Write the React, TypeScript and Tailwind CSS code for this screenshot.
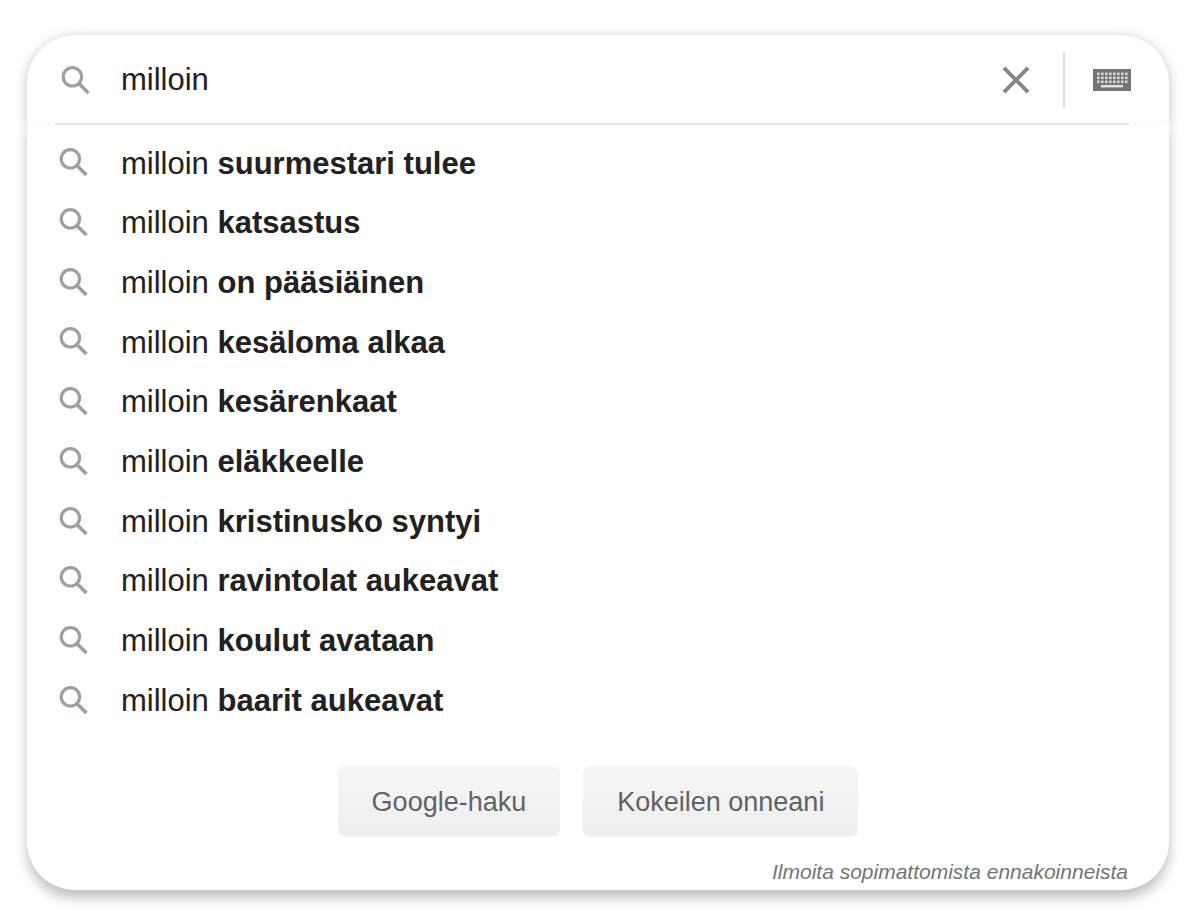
const QUERY = 'milloin';

const SUGGESTIONS = [
    'suurmestari tulee',
    'katsastus',
    'on pääsiäinen',
    'kesäloma alkaa',
    'kesärenkaat',
    'eläkkeelle',
    'kristinusko syntyi',
    'ravintolat aukeavat',
    'koulut avataan',
    'baarit aukeavat',
];

const SearchIcon = () => (
    <svg viewBox="0 0 39 39" className="size-[39px] shrink-0 fill-none stroke-[#9aa0a6]" aria-hidden="true">
        <circle cx="16.4" cy="15.8" r="9.2" strokeWidth="3.2" />
        <path d="M22.6 22.2L32.4 32" strokeWidth="3.6" />
    </svg>
);

const ClearIcon = () => (
    <svg viewBox="0 0 24 24" className="size-[46px] fill-[#80868b]" aria-hidden="true">
        <path d="M19 6.41L17.59 5 12 10.59 6.41 5 5 6.41 10.59 12 5 17.59 6.41 19 12 13.41 17.59 19 19 17.59 13.41 12z" />
    </svg>
);

const KeyboardIcon = () => (
    <svg viewBox="0 0 38 22" className="h-[22px] w-[38px]" aria-hidden="true">
        <rect width="38" height="22" fill="#757575" />
        {[3.5, 7.5, 11.5].map((y) =>
            [4, 8, 12, 16, 20, 24, 28, 32].map((x) => (
                <rect key={`${x}-${y}`} x={x} y={y} width="2.6" height="2.6" fill="#d6d6d6" />
            ))
        )}
        <rect x="8" y="16" width="22" height="2.4" fill="#e4e4e4" />
    </svg>
);

const SearchButton = ({ children }: { children: string }) => (
    <button
        type="button"
        className="h-[71px] rounded-lg bg-linear-to-b from-[#f5f5f5] to-[#efefef] px-[34px] pt-0.5 text-[27px] text-[#5f6368]"
    >
        {children}
    </button>
);

const App = () => {
    return (
        <main className="bg-white pt-[35px] pr-[31px] pb-[29px] pl-[27px] font-['Liberation_Sans',Arial,sans-serif] text-[31px] text-[#212121]">
            <form onSubmit={(e) => e.preventDefault()}>
                {/* Search field */}
                <div className="flex h-[88px] items-center rounded-t-[48px] bg-white pt-0.5 pr-[38px] pl-[29px] shadow-[0_2px_12px_rgba(32,33,36,0.28)]">
                    <SearchIcon />
                    <input
                        type="text"
                        aria-label="Haku"
                        defaultValue={QUERY}
                        className="ml-[26px] min-w-0 flex-1 bg-transparent outline-none"
                    />
                    <button type="button" aria-label="Tyhjennä">
                        <ClearIcon />
                    </button>
                    <span className="mr-7 ml-6 h-14 w-[2px] bg-[#dadce0]" />
                    <button type="button" aria-label="Näppäimistö">
                        <KeyboardIcon />
                    </button>
                </div>

                {/* Suggestions dropdown */}
                <div className="relative rounded-b-[48px] bg-white pb-1 shadow-[0_8px_12px_rgba(32,33,36,0.28)]">
                    <div className="mr-10 ml-7 h-[2px] bg-[#e4e6ea]" />
                    <ul className="mt-2 grid min-h-[597px] grid-rows-10">
                        {SUGGESTIONS.map((text) => (
                            <li key={text} className="flex items-center pl-[27px]">
                                <SearchIcon />
                                <a href="#" className="ml-7 pt-0.5 whitespace-pre">
                                    {QUERY} <b>{text}</b>
                                </a>
                            </li>
                        ))}
                    </ul>
                    <div className="mt-9 flex justify-center gap-[23px]">
                        <SearchButton>Google-haku</SearchButton>
                        <SearchButton>Kokeilen onneani</SearchButton>
                    </div>
                    <div className="mt-5 mr-[41px] text-right text-[21px] leading-[29px] text-[#70757a] italic">
                        <a href="#">Ilmoita sopimattomista ennakoinneista</a>
                    </div>
                </div>
            </form>
        </main>
    );
};

export default App;
